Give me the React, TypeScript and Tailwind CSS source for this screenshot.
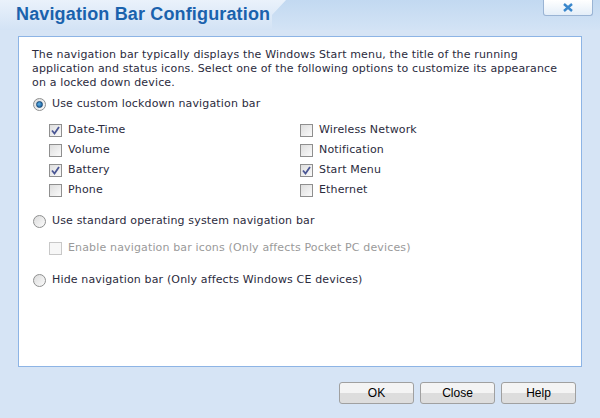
import { useState } from "react"

function Radio({ checked, label, onClick }: { checked: boolean; label: string; onClick: () => void }) {
  return (
    <label className="flex items-center h-4 gap-[6px] cursor-default" onClick={onClick}>
      <span className="w-[13px] h-[13px] rounded-full border border-[#8e8f8f] bg-gradient-to-br from-[#dcdcdc] to-[#fbfbfb] flex items-center justify-center">
        {checked && (
          <span className="w-[7px] h-[7px] rounded-full bg-[radial-gradient(circle_at_40%_40%,#5fb1e8,#0c4f8c)] border border-[#174a7a]" />
        )}
      </span>
      <span>{label}</span>
    </label>
  )
}

function Check({ checked, label, disabled, onClick }: { checked: boolean; label: string; disabled?: boolean; onClick?: () => void }) {
  return (
    <label className={"flex items-center h-5 gap-[6px] cursor-default " + (disabled ? "text-[#9a9a9a]" : "")} onClick={onClick}>
      <span
        className={
          "w-[13px] h-[13px] border flex items-center justify-center " +
          (disabled ? "border-[#c8c8c8] bg-[#f7f7f7]" : "border-[#8f8f8f] bg-gradient-to-br from-[#dedede] to-[#fafafa]")
        }
      >
        {checked && (
          <svg width="9" height="9" viewBox="0 0 9 9">
            <path d="M1 4.5 L3.5 7.5 L8 1" fill="none" stroke="#4a5694" strokeWidth="1.8" />
          </svg>
        )}
      </span>
      <span>{label}</span>
    </label>
  )
}

export default function App() {
  const [mode, setMode] = useState(0)
  const [checks, setChecks] = useState<Record<string, boolean>>({
    "Date-Time": true,
    Volume: false,
    Battery: true,
    Phone: false,
    "Wireless Network": false,
    Notification: false,
    "Start Menu": true,
    Ethernet: false,
  })

  const toggle = (k: string) => setChecks({ ...checks, [k]: !checks[k] })
  const left = ["Date-Time", "Volume", "Battery", "Phone"]
  const right = ["Wireless Network", "Notification", "Start Menu", "Ethernet"]

  return (
    <div className="w-[600px] h-[418px] bg-[#d6e4f5] flex flex-col text-[11px] tracking-[0.15px] text-[#2b2b3d] overflow-hidden" style={{ fontFamily: '"DejaVu Sans", Verdana, sans-serif' }}>
      {/* title bar */}
      <div className="relative h-[30px] bg-gradient-to-b from-[#c2d9f1] to-[#d3e3f5] flex">
        <div className="w-[286px] h-full bg-gradient-to-b from-[#eaf2fb] to-[#d3e3f5] [clip-path:polygon(0_0,100%_0,calc(100%-14px)_50%,calc(100%-14px)_100%,0_100%)]">
          <h1
            className="pl-4 pt-[2px] text-[18px] font-bold text-[#1a62ad] leading-[24px] whitespace-nowrap tracking-[0.15px]"
            style={{ fontFamily: '"Liberation Sans", Arial, sans-serif' }}
          >
            Navigation Bar Configuration
          </h1>
        </div>
        <button className="absolute right-[7px] top-0 w-[50px] h-[16px] rounded-b-[3px] border border-t-0 border-[#9ab4d4] bg-gradient-to-b from-[#ffffff] to-[#e4eef8] flex items-center justify-center">
          <svg width="12" height="9" viewBox="0 0 12 9">
            <path d="M2 1 L10 8 M10 1 L2 8" stroke="#3a87cc" strokeWidth="2.4" />
          </svg>
        </button>
      </div>

      {/* content panel */}
      <div className="mt-[6px] ml-[18px] w-[564px] h-[331px] bg-white border border-[#8db4e5] px-[13px] pt-[11px]">
        <p className="leading-[14px] w-[530px]">
          The navigation bar typically displays the Windows Start menu, the title of the running application and status icons. Select one of the following options to customize its appearance on a locked down device.
        </p>

        <div className="mt-[6px] ml-[1px]">
          <Radio checked={mode === 0} label="Use custom lockdown navigation bar" onClick={() => setMode(0)} />
        </div>

        <div className="mt-[8px] ml-[17px] grid grid-cols-[251px_1fr]">
          <div className="flex flex-col">
            {left.map((k) => (
              <Check key={k} label={k} checked={checks[k]} onClick={() => toggle(k)} />
            ))}
          </div>
          <div className="flex flex-col">
            {right.map((k) => (
              <Check key={k} label={k} checked={checks[k]} onClick={() => toggle(k)} />
            ))}
          </div>
        </div>

        <div className="mt-[13px] ml-[1px]">
          <Radio checked={mode === 1} label="Use standard operating system navigation bar" onClick={() => setMode(1)} />
        </div>

        <div className="mt-[9px] ml-[17px]">
          <Check label="Enable navigation bar icons (Only affects Pocket PC devices)" checked={false} disabled />
        </div>

        <div className="mt-[14px] ml-[1px]">
          <Radio checked={mode === 2} label="Hide navigation bar (Only affects Windows CE devices)" onClick={() => setMode(2)} />
        </div>
      </div>

      {/* buttons */}
      <div className="mt-[15px] pr-[24px] flex justify-end gap-[6px]">
        {["OK", "Close", "Help"].map((b) => (
          <button
            key={b}
            className="w-[75px] h-[22px] rounded-[3px] border border-[#a0a0a0] bg-gradient-to-b from-[#f4f4f4] from-50% to-[#dddddd] to-50% text-[12px] text-black tracking-normal"
            style={{ fontFamily: '"Liberation Sans", Arial, sans-serif' }}
          >
            {b}
          </button>
        ))}
      </div>
    </div>
  )
}
